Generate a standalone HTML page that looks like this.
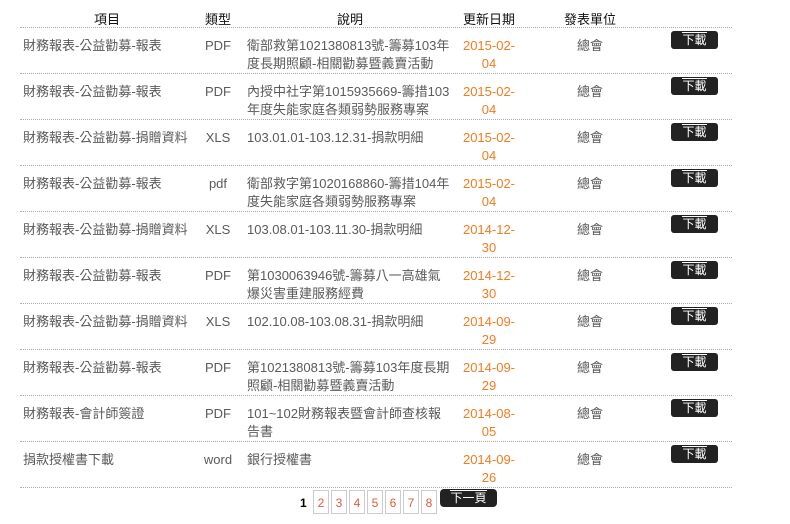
<!DOCTYPE html>
<html><head><meta charset="utf-8"><style>
body{margin:0;width:790px;height:524px;background:#fff;font-family:"Liberation Sans","Noto Sans CJK TC",sans-serif;font-size:13px;color:#5a5a5a;position:relative;overflow:hidden}
.h{position:absolute;top:9px;color:#111;font-size:13px}
.row{position:absolute;left:20px;width:712px;height:46px;border-top:1px dotted #aaa}
.row div{position:absolute;line-height:18px}
.a{left:3px;top:9px}
.t{left:178px;width:40px;text-align:center;top:9px}
.d{left:227px;width:210px;top:9px}
.dt{left:434px;width:70px;text-align:center;top:9px;color:#f47b20}
.u{left:545px;width:50px;text-align:center;top:9px}
.b{left:651px;top:3px;width:47px;height:18px;background:#222;color:#fff;border-radius:3px;text-align:center;font-size:12px;line-height:19px!important}
.b span{border-top:1px solid #fff}
.pg{position:absolute;top:490px;width:14px;height:22px;border:1px solid #ccc;color:#e05a3a;text-align:center;line-height:24px;font-size:12px}
</style></head><body>
<div class="h" style="left:94px">項目</div>
<div class="h" style="left:205px">類型</div>
<div class="h" style="left:337px">說明</div>
<div class="h" style="left:463px">更新日期</div>
<div class="h" style="left:564px">發表單位</div>

<div class="row" style="top:27px"><div class="a">財務報表-公益勸募-報表</div><div class="t">PDF</div><div class="d">衛部救第1021380813號-籌募103年度長期照顧-相關勸募暨義賣活動</div><div class="dt">2015-02-<br>04</div><div class="u">總會</div><div class="b"><span>下載</span></div></div>
<div class="row" style="top:73px"><div class="a">財務報表-公益勸募-報表</div><div class="t">PDF</div><div class="d">內授中社字第1015935669-籌措103年度失能家庭各類弱勢服務專案</div><div class="dt">2015-02-<br>04</div><div class="u">總會</div><div class="b"><span>下載</span></div></div>
<div class="row" style="top:119px"><div class="a">財務報表-公益勸募-捐贈資料</div><div class="t">XLS</div><div class="d">103.01.01-103.12.31-捐款明細</div><div class="dt">2015-02-<br>04</div><div class="u">總會</div><div class="b"><span>下載</span></div></div>
<div class="row" style="top:165px"><div class="a">財務報表-公益勸募-報表</div><div class="t">pdf</div><div class="d">衛部救字第1020168860-籌措104年度失能家庭各類弱勢服務專案</div><div class="dt">2015-02-<br>04</div><div class="u">總會</div><div class="b"><span>下載</span></div></div>
<div class="row" style="top:211px"><div class="a">財務報表-公益勸募-捐贈資料</div><div class="t">XLS</div><div class="d">103.08.01-103.11.30-捐款明細</div><div class="dt">2014-12-<br>30</div><div class="u">總會</div><div class="b"><span>下載</span></div></div>
<div class="row" style="top:257px"><div class="a">財務報表-公益勸募-報表</div><div class="t">PDF</div><div class="d">第1030063946號-籌募八一高雄氣<br>爆災害重建服務經費</div><div class="dt">2014-12-<br>30</div><div class="u">總會</div><div class="b"><span>下載</span></div></div>
<div class="row" style="top:303px"><div class="a">財務報表-公益勸募-捐贈資料</div><div class="t">XLS</div><div class="d">102.10.08-103.08.31-捐款明細</div><div class="dt">2014-09-<br>29</div><div class="u">總會</div><div class="b"><span>下載</span></div></div>
<div class="row" style="top:349px"><div class="a">財務報表-公益勸募-報表</div><div class="t">PDF</div><div class="d">第1021380813號-籌募103年度長期<br>照顧-相關勸募暨義賣活動</div><div class="dt">2014-09-<br>29</div><div class="u">總會</div><div class="b"><span>下載</span></div></div>
<div class="row" style="top:395px"><div class="a">財務報表-會計師簽證</div><div class="t">PDF</div><div class="d">101~102財務報表暨會計師查核報<br>告書</div><div class="dt">2014-08-<br>05</div><div class="u">總會</div><div class="b"><span>下載</span></div></div>
<div class="row" style="top:441px"><div class="a">捐款授權書下載</div><div class="t">word</div><div class="d">銀行授權書</div><div class="dt">2014-09-<br>26</div><div class="u">總會</div><div class="b"><span>下載</span></div></div>
<div class="row" style="top:487px;height:0"></div>

<div style="position:absolute;left:300px;top:496px;color:#000;font-size:12px;font-weight:bold">1</div>
<div class="pg" style="left:313px">2</div>
<div class="pg" style="left:331px">3</div>
<div class="pg" style="left:349px">4</div>
<div class="pg" style="left:367px">5</div>
<div class="pg" style="left:385px">6</div>
<div class="pg" style="left:403px">7</div>
<div class="pg" style="left:421px">8</div>
<div style="position:absolute;left:440px;top:489px;width:57px;height:18px;background:#222;color:#fff;border-radius:4px;text-align:center;font-size:12px;line-height:19px"><span style="border-top:1px solid #fff">下一頁</span></div>
</body></html>
